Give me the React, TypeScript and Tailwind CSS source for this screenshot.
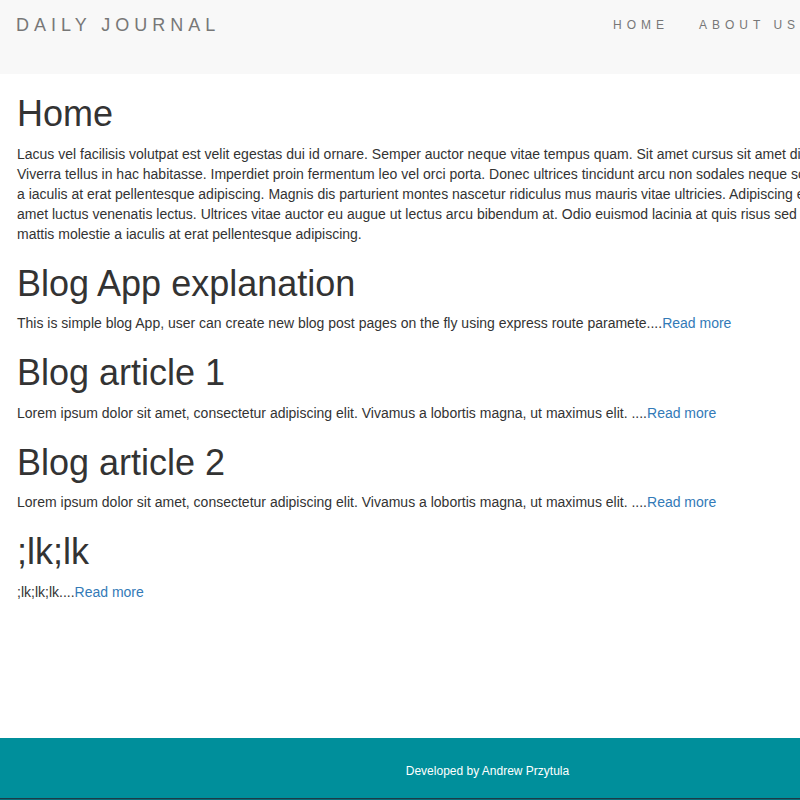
import React from "react";

const homeLines = [
  "Lacus vel facilisis volutpat est velit egestas dui id ornare. Semper auctor neque vitae tempus quam. Sit amet cursus sit amet dictum sit amet justo donec enim.",
  "Viverra tellus in hac habitasse. Imperdiet proin fermentum leo vel orci porta. Donec ultrices tincidunt arcu non sodales neque sodales ut etiam. Mattis molestie",
  "a iaculis at erat pellentesque adipiscing. Magnis dis parturient montes nascetur ridiculus mus mauris vitae ultricies. Adipiscing elit ut aliquam purus sit",
  "amet luctus venenatis lectus. Ultrices vitae auctor eu augue ut lectus arcu bibendum at. Odio euismod lacinia at quis risus sed vulputate odio ut. Cursus",
  "mattis molestie a iaculis at erat pellentesque adipiscing.",
];

const posts = [
  {
    title: "Blog App explanation",
    excerpt:
      "This is simple blog App, user can create new blog post pages on the fly using express route paramete....",
  },
  {
    title: "Blog article 1",
    excerpt:
      "Lorem ipsum dolor sit amet, consectetur adipiscing elit. Vivamus a lobortis magna, ut maximus elit. ....",
  },
  {
    title: "Blog article 2",
    excerpt:
      "Lorem ipsum dolor sit amet, consectetur adipiscing elit. Vivamus a lobortis magna, ut maximus elit. ....",
  },
  { title: ";lk;lk", excerpt: ";lk;lk;lk...." },
];

const App = () => {
  return (
    <div className="w-full min-h-screen overflow-hidden bg-white">
      <div className="w-[975px] min-h-screen flex flex-col font-['Liberation_Sans',Arial,sans-serif] text-[#333]">
        {/* navbar */}
        <nav className="h-[74px] bg-[#f8f8f8] flex justify-between px-[15px]">
          <a
            href="/"
            className="block p-[15px] -ml-[14px] text-[18px] leading-[20px] tracking-[5px] text-[#777]"
          >
            DAILY JOURNAL
          </a>
          <ul className="flex -mr-[12px]">
            <li>
              <a href="/" className="block p-[15px] text-[12px] leading-[20px] tracking-[5px] text-[#777]">
                HOME
              </a>
            </li>
            <li>
              <a href="/about" className="block p-[15px] text-[12px] leading-[20px] tracking-[5px] text-[#777]">
                ABOUT US
              </a>
            </li>
            <li>
              <a href="/contact" className="block p-[15px] text-[12px] leading-[20px] tracking-[5px] text-[#777]">
                CONTACT US
              </a>
            </li>
          </ul>
        </nav>

        <main className="flex-1 px-[17px]">
          <h1 className="mt-5 mb-2.5 text-[36px] leading-[1.1] font-normal">Home</h1>
          <p className="mb-2.5 text-[14px] leading-[20px] whitespace-nowrap">
            {homeLines.map((line, i) => (
              <React.Fragment key={i}>
                {line}
                {i < homeLines.length - 1 && <br />}
              </React.Fragment>
            ))}
          </p>

          {posts.map((post) => (
            <div key={post.title}>
              <h1 className="mt-5 mb-2.5 text-[36px] leading-[1.1] font-normal">{post.title}</h1>
              <p className="mb-2.5 text-[14px] leading-[20px]">
                {post.excerpt}
                <a href="#" className="text-[#337ab7] hover:underline">
                  Read more
                </a>
              </p>
            </div>
          ))}
        </main>

        <footer className="bg-[#008f9b]">
          <p className="h-[60px] pt-[25px] text-center text-[12px] leading-[16px] text-white">
            Developed by Andrew Przytula
          </p>
          <div className="h-px bg-[#1c3c48]" />
          <div className="h-px bg-[#0b6d78]" />
        </footer>
      </div>
    </div>
  );
};

export default App;
